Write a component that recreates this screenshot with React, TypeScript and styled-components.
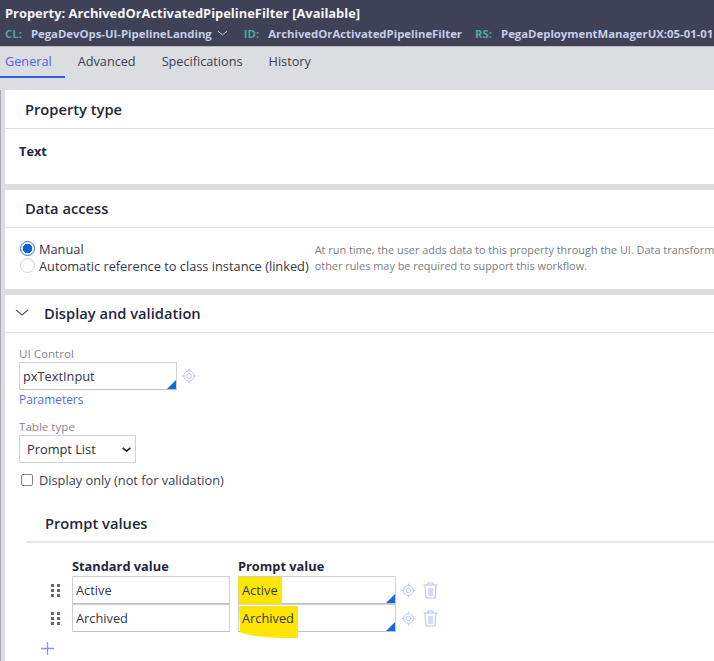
import React from 'react';
import styled, { createGlobalStyle } from 'styled-components';

const GlobalStyle = createGlobalStyle`
  html, body {
    margin: 0;
    padding: 0;
    height: 661px;
    overflow: hidden;
    background: #dcdde1;
    font-family: "Open Sans", "Liberation Sans", sans-serif;
    color: #24273b;
  }
  * { box-sizing: border-box; }
`;

const Page = styled.div`
  width: 714px;
  height: 661px;
  overflow: hidden;
  display: flex;
  flex-direction: column;
`;

const Header = styled.header`
  height: 47px;
  flex: none;
  background: #3f4257;
  border-bottom: 1px solid #b9bbc5;
  padding: 5px 0 0 5px;
  white-space: nowrap;
`;

const HeaderTitle = styled.div`
  font-size: 12.9px;
  line-height: 17px;
  font-weight: 700;
  color: #f4f5f8;
`;

const HeaderMeta = styled.div`
  display: flex;
  align-items: center;
  height: 16px;
  margin-top: 3px;
  font-size: 11.35px;
  font-weight: 700;
`;

const MetaKey = styled.span`
  color: #4fa5a6;
  margin-right: 9px;
`;

const MetaValue = styled.span<{ $gap: number }>`
  color: #c6cee9;
  margin-right: ${(props) => props.$gap}px;
  display: flex;
  align-items: center;
  gap: 5px;
`;

const Tabs = styled.nav`
  height: 43px;
  flex: none;
  display: flex;
  align-items: flex-start;
  margin-left: -8px;
`;

const Tab = styled.div<{ $active?: boolean }>`
  height: 31px;
  padding: 5px 13px 0;
  font-size: 12.7px;
  line-height: 19px;
  color: ${(props) => (props.$active ? '#4f63e6' : '#3b3e52')};
  border-bottom: 2px solid ${(props) => (props.$active ? '#2f5fe0' : 'transparent')};
`;

const Body = styled.main`
  flex: 1;
  display: flex;
  flex-direction: column;
  gap: 6px;
  padding-left: 5px;
  border-left: 1px solid #a9aab2;
`;

const Card = styled.section<{ $height?: number }>`
  background: #fff;
  margin-left: -1px;
  ${(props) => (props.$height ? `height: ${props.$height}px; flex: none;` : 'flex: 1;')}
`;

const CardHead = styled.div<{ $height: number; $raised?: boolean }>`
  height: ${(props) => props.$height}px;
  display: flex;
  align-items: center;
  padding-left: 20px;
  padding-bottom: ${(props) => (props.$raised ? 2 : 0)}px;
  border-bottom: 1px solid #dcdde3;
  font-size: 14.7px;
  font-weight: 600;
  color: #24273b;
`;

const CollapseHead = styled(CardHead)`
  padding-left: 10px;
  gap: 15px;
`;

const PlainValue = styled.div`
  padding: 14px 0 0 14px;
  font-size: 12.8px;
  line-height: 17px;
  font-weight: 700;
`;

const AccessRow = styled.div`
  display: flex;
  padding: 12px 0 0 15px;
  gap: 6px;
  white-space: nowrap;
`;

const RadioGroup = styled.div`
  display: flex;
  flex-direction: column;
  flex: none;
`;

const RadioRow = styled.div`
  display: flex;
  align-items: center;
  gap: 4px;
  height: 17px;
  font-size: 12.8px;
  color: #33364a;
`;

const Radio = styled.span<{ $checked?: boolean }>`
  width: 15px;
  height: 15px;
  border-radius: 50%;
  flex: none;
  border: 1px solid ${(props) => (props.$checked ? '#2f73e6' : '#d2d3d8')};
  background: ${(props) =>
    props.$checked ? 'radial-gradient(circle, #0b63e5 0 4.5px, #fff 5px)' : '#fff'};
`;

const HelpText = styled.div`
  font-size: 10.9px;
  line-height: 15.5px;
  color: #7b7d85;
  padding-top: 2px;
`;

const FormArea = styled.div`
  padding: 13px 0 0 14px;
`;

const FieldLabel = styled.div`
  font-size: 11.6px;
  line-height: 15px;
  color: #85878f;
`;

const FieldRow = styled.div`
  display: flex;
  align-items: center;
  gap: 4px;
  margin-top: 1px;
`;

const TextBox = styled.div<{ $width: number; $caret?: boolean }>`
  position: relative;
  width: ${(props) => props.$width}px;
  height: 28px;
  border: 1px solid #cfd0d6;
  border-bottom-color: #bfc0c7;
  background: #fff;
  padding-left: 3px;
  font-size: 12.8px;
  line-height: 26px;
  color: #33364a;

  ${(props) =>
    props.$caret &&
    `&::after {
      content: '';
      position: absolute;
      right: 0;
      bottom: 0;
      border-style: solid;
      border-width: 0 0 9px 9px;
      border-color: transparent transparent #1467e6 transparent;
    }`}
`;

const TextLink = styled.div`
  font-size: 11.9px;
  line-height: 18px;
  color: #5a6de6;
  margin-bottom: 11px;
`;

const SelectBox = styled.div`
  width: 117px;
  height: 28px;
  margin-top: 1px;
  border: 1px solid #cfd0d6;
  padding: 0 4px 0 7px;
  display: flex;
  align-items: center;
  justify-content: space-between;
  font-size: 12.8px;
  color: #2b2e42;
`;

const CheckRow = styled.div`
  display: flex;
  align-items: center;
  gap: 6px;
  height: 18px;
  margin: 8px 0 0 2px;
  font-size: 12.8px;
  color: #3b3e52;
`;

const CheckBox = styled.span`
  width: 12px;
  height: 12px;
  border: 1.5px solid #85868c;
  border-radius: 2px;
  flex: none;
`;

const SubSection = styled.div`
  margin: 23px 0 0 7px;
`;

const SubHead = styled.div`
  height: 31px;
  padding: 0 0 7px 19px;
  display: flex;
  align-items: center;
  border-bottom: 2px solid #e6e7eb;
  font-size: 14.7px;
  font-weight: 600;
`;

const PromptGrid = styled.div`
  display: grid;
  grid-template-columns: 46px 158px 8px 158px auto;
  align-items: center;
  margin-top: 14px;
`;

const ColumnHead = styled.div`
  font-size: 12.8px;
  line-height: 19px;
  font-weight: 700;
  height: 19px;
`;

const Spacer = styled.div``;

const Handle = styled.div`
  display: flex;
  justify-content: flex-end;
  padding-right: 12px;
`;

const Actions = styled.div`
  display: flex;
  align-items: center;
  gap: 7px;
  padding-left: 5px;
`;

const Marker = styled.svg`
  position: absolute;
  left: -1px;
  top: 0;
  pointer-events: none;
`;

const MarkerText = styled.span`
  position: relative;
`;

const AddButton = styled.div`
  margin: 9px 0 0 14px;
  height: 16px;
  display: flex;
`;

function TargetIcon({ size = 16 }: { size?: number }) {
  return (
    <svg width={size} height={size} viewBox="0 0 16 16" fill="none" stroke="#b9c4f4" strokeWidth="1">
      <circle cx="8" cy="8" r="5.2" />
      <circle cx="8" cy="8" r="2.4" />
      <path d="M8 0.5v2.3M8 13.2v2.3M0.5 8h2.3M13.2 8h2.3" />
    </svg>
  );
}

function TrashIcon() {
  return (
    <svg width="15" height="17" viewBox="0 0 15 17" fill="none" stroke="#b9c4f4" strokeWidth="1.1">
      <path d="M0.5 3h14M5 3V1h5v2M2 3l1 13h9l1-13" />
      <rect x="5" y="6" width="5" height="8" fill="#d3daf8" stroke="none" />
    </svg>
  );
}

function DragIcon() {
  return (
    <svg width="9" height="13" viewBox="0 0 9 13" fill="#66686f">
      {[0, 5, 10].map((y) => (
        <g key={y}>
          <rect x="0" y={y} width="3" height="3" />
          <rect x="6" y={y} width="3" height="3" />
        </g>
      ))}
    </svg>
  );
}

function Chevron({ color, width, height, weight = 1.2 }: { color: string; width: number; height: number; weight?: number }) {
  return (
    <svg width={width} height={height} viewBox="0 0 14 7" fill="none" stroke={color} strokeWidth={weight}>
      <path d="M1 1l6 5 6-5" />
    </svg>
  );
}

function PromptCell({ value, markerWidth, tail }: { value: string; markerWidth: number; tail?: boolean }) {
  return (
    <TextBox $width={158} $caret>
      <Marker width={markerWidth + 2} height={34}>
        <path
          d={
            tail
              ? `M1 1H${markerWidth}V33C${markerWidth / 2} 33 10 31 2 27Z`
              : `M0 0H${markerWidth}V27H1Z`
          }
          fill="#ffe600"
        />
      </Marker>
      <MarkerText>{value}</MarkerText>
    </TextBox>
  );
}

const rows = [
  { value: 'Active', markerWidth: 44, tail: false },
  { value: 'Archived', markerWidth: 60, tail: true },
];

export default function App() {
  return (
    <Page>
      <GlobalStyle />
      <Header>
        <HeaderTitle>Property: ArchivedOrActivatedPipelineFilter [Available]</HeaderTitle>
        <HeaderMeta>
          <MetaKey>CL:</MetaKey>
          <MetaValue $gap={16}>
            PegaDevOps-UI-PipelineLanding
            <Chevron color="#c6cee9" width={11} height={6} />
          </MetaValue>
          <MetaKey>ID:</MetaKey>
          <MetaValue $gap={13}>ArchivedOrActivatedPipelineFilter</MetaValue>
          <MetaKey>RS:</MetaKey>
          <MetaValue $gap={0}>PegaDeploymentManagerUX:05-01-01</MetaValue>
        </HeaderMeta>
      </Header>

      <Tabs>
        <Tab $active>General</Tab>
        <Tab>Advanced</Tab>
        <Tab>Specifications</Tab>
        <Tab>History</Tab>
      </Tabs>

      <Body>
        <Card $height={94}>
          <CardHead $height={39}>Property type</CardHead>
          <PlainValue>Text</PlainValue>
        </Card>

        <Card $height={99}>
          <CardHead $height={38} $raised>Data access</CardHead>
          <AccessRow>
            <RadioGroup>
              <RadioRow>
                <Radio $checked />
                Manual
              </RadioRow>
              <RadioRow>
                <Radio />
                Automatic reference to class instance (linked)
              </RadioRow>
            </RadioGroup>
            <HelpText>
              At run time, the user adds data to this property through the UI. Data transform
              <br />
              other rules may be required to support this workflow.
            </HelpText>
          </AccessRow>
        </Card>

        <Card>
          <CollapseHead $height={38} $raised>
            <Chevron color="#55586a" width={14} height={7} />
            Display and validation
          </CollapseHead>
          <FormArea>
            <FieldLabel>UI Control</FieldLabel>
            <FieldRow>
              <TextBox $width={158} $caret>
                pxTextInput
              </TextBox>
              <TargetIcon />
            </FieldRow>
            <TextLink>Parameters</TextLink>
            <FieldLabel>Table type</FieldLabel>
            <SelectBox>
              Prompt List
              <Chevron color="#1f2233" width={9} height={5} weight={2.6} />
            </SelectBox>
            <CheckRow>
              <CheckBox />
              Display only (not for validation)
            </CheckRow>

            <SubSection>
              <SubHead>Prompt values</SubHead>
              <PromptGrid>
                <Spacer />
                <ColumnHead>Standard value</ColumnHead>
                <Spacer />
                <ColumnHead>Prompt value</ColumnHead>
                <Spacer />
                {rows.map((row) => (
                  <React.Fragment key={row.value}>
                    <Handle>
                      <DragIcon />
                    </Handle>
                    <TextBox $width={158}>{row.value}</TextBox>
                    <Spacer />
                    <PromptCell value={row.value} markerWidth={row.markerWidth} tail={row.tail} />
                    <Actions>
                      <TargetIcon size={15} />
                      <TrashIcon />
                    </Actions>
                  </React.Fragment>
                ))}
              </PromptGrid>
              <AddButton>
                <svg width="15" height="15" viewBox="0 0 15 15" stroke="#8094ee" strokeWidth="1.3">
                  <path d="M7.5 1v13M1 7.5h13" />
                </svg>
              </AddButton>
            </SubSection>
          </FormArea>
        </Card>
      </Body>
    </Page>
  );
}
